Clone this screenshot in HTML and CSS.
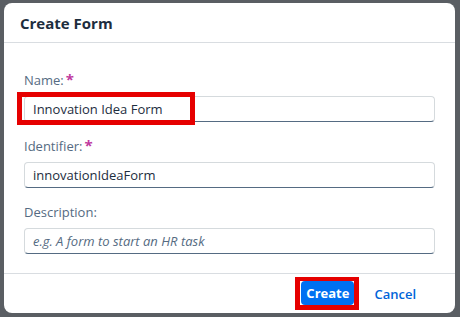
FILE: index.html
```html
<!DOCTYPE html>
<html lang="en">
<head>
    <meta charset="UTF-8">
    <meta name="viewport" content="width=device-width, initial-scale=1.0">
    <title>Create Form</title>
    <link rel="stylesheet" href="styles.css">
</head>
<body>
    <div class="dialog">
        <div class="dialog-header">
            <h2>Create Form</h2>
        </div>
        <form class="dialog-content" id="createForm">
            <div class="form-group">
                <label for="name">Name:<span class="required">*</span></label>
                <div class="field">
                    <input type="text" id="name" name="name" value="Innovation Idea Form">
                    <span class="highlight highlight-name"></span>
                </div>
            </div>
            <div class="form-group">
                <label for="identifier">Identifier:<span class="required">*</span></label>
                <input type="text" id="identifier" name="identifier" value="innovationIdeaForm">
            </div>
            <div class="form-group">
                <label for="description">Description:</label>
                <input type="text" id="description" name="description" placeholder="e.g. A form to start an HR task">
            </div>
        </form>
        <div class="dialog-footer">
            <span class="highlight-btn">
                <button type="submit" form="createForm" class="btn-create">Create</button>
            </span>
            <button type="button" class="btn-cancel">Cancel</button>
        </div>
    </div>
</body>
</html>
```

FILE: styles.css
```css
body {
    font-family: "Open Sans", Arial, sans-serif;
    background-color: #5a5e63;
    margin: 0;
    padding: 3px 5px 4px 4px;
    height: 317px;
    box-sizing: border-box;
}

.dialog {
    background-color: white;
    border-radius: 8px;
    height: 310px;
    display: flex;
    flex-direction: column;
    overflow: hidden;
}

.dialog-header {
    height: 40px;
    box-sizing: border-box;
    border-bottom: 1px solid #d9dde1;
    padding: 0 16px;
    display: flex;
    align-items: center;
    flex-shrink: 0;
}

h2 {
    margin: 0;
    font-size: 15px;
    font-weight: 700;
    color: #1d2d3e;
}

.dialog-content {
    flex: 1;
    padding: 28px 20px 0 20px;
}

.form-group {
    margin-bottom: 15px;
}

.form-group label {
    display: block;
    font-size: 13px;
    color: #556b82;
    margin-bottom: 7px;
    line-height: 18px;
}

.required {
    color: #c0399f;
    font-weight: 700;
    font-size: 15px;
    margin-left: 2px;
    line-height: 10px;
}

.field {
    position: relative;
}

.form-group input {
    display: block;
    width: 100%;
    height: 26px;
    padding: 0 8px;
    border: 1px solid #d5dadd;
    border-bottom: 1px solid #556b82;
    border-radius: 4px;
    box-sizing: border-box;
    font-family: inherit;
    font-size: 13px;
    color: #1d2d3e;
    background-color: white;
}

.form-group input::placeholder {
    color: #556b82;
    font-style: italic;
}

.highlight {
    position: absolute;
    border: 5px solid #e60000;
    pointer-events: none;
}

.highlight-name {
    left: -7px;
    top: -4px;
    width: 168px;
    height: 23px;
}

.dialog-footer {
    height: 40px;
    box-sizing: border-box;
    border-top: 1px solid #d9dde1;
    display: flex;
    align-items: center;
    justify-content: flex-end;
    padding: 0 39px 0 0;
    gap: 15px;
    flex-shrink: 0;
}

.highlight-btn {
    display: flex;
    border: 5px solid #e60000;
    border-top-width: 4px;
    padding-left: 1px;
}

.btn-create {
    background-color: #0070f2;
    color: white;
    border: none;
    border-radius: 4px;
    height: 24px;
    padding: 0 5px;
    font-family: inherit;
    font-size: 13px;
    font-weight: 700;
    cursor: pointer;
}

.btn-cancel {
    background: none;
    border: none;
    color: #0064d9;
    font-family: inherit;
    font-size: 13px;
    font-weight: 600;
    padding: 0;
    cursor: pointer;
}
```
